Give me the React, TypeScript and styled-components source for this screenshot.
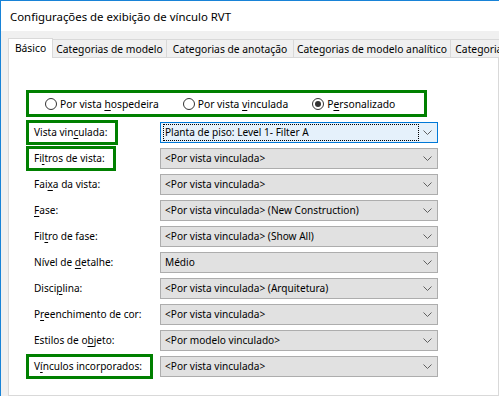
import React from 'react';
import styled, { createGlobalStyle } from 'styled-components';

const GREEN = '#008000';
const FONT = '"Segoe UI", "Noto Sans", sans-serif';

const GlobalStyle = createGlobalStyle`
  html, body { margin: 0; padding: 0; background: #fff; }
  body { font-family: ${FONT}; font-size: 10.1px; color: #000; }
  u { text-underline-offset: 2px; }
`;

const TABS: { title: string; width: number }[] = [
  { title: 'Básico', width: 45 },
  { title: 'Categorias de modelo', width: 114 },
  { title: 'Categorias de anotação', width: 127 },
  { title: 'Categorias de modelo analítico', width: 157 },
  { title: 'Categorias importadas', width: 120 },
];

type Field = { label: React.ReactNode; value: string; marked?: boolean; focused?: boolean };

const FIELDS: Field[] = [
  { label: <>Vista vin<u>c</u>ulada:</>, value: 'Planta de piso: Level 1- Filter A', marked: true, focused: true },
  { label: <>Fi<u>l</u>tros de vista:</>, value: '<Por vista vinculada>', marked: true },
  { label: <>Fai<u>x</u>a da vista:</>, value: '<Por vista vinculada>' },
  { label: <><u>F</u>ase:</>, value: '<Por vista vinculada> (New Construction)' },
  { label: <>Fil<u>t</u>ro de fase:</>, value: '<Por vista vinculada> (Show All)' },
  { label: <>Nível de <u>d</u>etalhe:</>, value: 'Médio' },
  { label: <>Disci<u>p</u>lina:</>, value: '<Por vista vinculada> (Arquitetura)' },
  { label: <>P<u>r</u>eenchimento de cor:</>, value: '<Por vista vinculada>' },
  { label: <>Estilos de o<u>b</u>jeto:</>, value: '<Por modelo vinculado>' },
  { label: <>V<u>í</u>nculos incorporados:</>, value: '<Por vista vinculada>', marked: true },
];

const Chevron = () => (
  <svg width="9" height="5" viewBox="0 0 9 5">
    <path d="M0.5 0.5 L4.5 4.5 L8.5 0.5" fill="none" stroke="#606060" strokeWidth="1" />
  </svg>
);

const App: React.FC = () => (
  <Window>
    <GlobalStyle />
    <TitleBar>Configurações de exibição de vínculo RVT</TitleBar>
    <Body>
      <TabStrip>
        {TABS.map((t, i) => (
          <Tab key={t.title} $active={i === 0} $width={t.width}>{t.title}</Tab>
        ))}
      </TabStrip>
      <Panel>
        <RadioBox>
          <RadioOption>
            <Radio />
            <span>Por vista <u>h</u>ospedeira</span>
          </RadioOption>
          <RadioOption>
            <Radio />
            <span>Por vista <u>v</u>inculada</span>
          </RadioOption>
          <RadioOption>
            <Radio $checked />
            <span>P<u>e</u>rsonalizado</span>
          </RadioOption>
        </RadioBox>
        <Fields>
          {FIELDS.map((f, i) => (
            <Row key={i}>
              <LabelCell>
                <Label $marked={!!f.marked}>{f.label}</Label>
              </LabelCell>
              <Combo $focused={!!f.focused}>
                <ComboText $focused={!!f.focused}>{f.value}</ComboText>
                <Chevron />
              </Combo>
            </Row>
          ))}
        </Fields>
      </Panel>
    </Body>
  </Window>
);

const Window = styled.div`
  width: 499px;
  height: 396px;
  box-sizing: border-box;
  border-top: 1px solid #1883d7;
  border-left: 1px solid #1883d7;
  display: flex;
  flex-direction: column;
  overflow: hidden;
`;
const TitleBar = styled.div`
  height: 30px;
  flex: none;
  display: flex;
  align-items: center;
  padding-left: 9px;
  background: #fff;
  font-size: 11.4px;
`;
const Body = styled.div`
  flex: 1;
  background: #f0f0f0;
  padding: 7px 0 0 7px;
  display: flex;
  flex-direction: column;
  min-height: 0;
`;
const TabStrip = styled.div`
  display: flex;
  align-items: flex-end;
  height: 19px;
  flex: none;
  white-space: nowrap;
  position: relative;
  z-index: 1;
  font-size: 10.3px;
`;
const Tab = styled.div<{ $active: boolean; $width: number }>`
  flex: none;
  box-sizing: border-box;
  width: ${({ $width }) => $width}px;
  height: ${({ $active }) => ($active ? 20 : 18)}px;
  margin-bottom: ${({ $active }) => ($active ? -1 : 0)}px;
  padding-bottom: ${({ $active }) => ($active ? 2 : 0)}px;
  display: flex;
  align-items: center;
  justify-content: center;
  background: ${({ $active }) => ($active ? '#fff' : '#f0f0f0')};
  border: 1px solid #d9d9d9;
  border-bottom: none;
  & + & { border-left: ${({ $active }) => ($active ? '1px solid #d9d9d9' : 'none')}; }
`;
const Panel = styled.div`
  flex: 1;
  background: #fff;
  border: 1px solid #d9d9d9;
  padding: 32px 0 0 17px;
`;
const RadioBox = styled.div`
  box-sizing: border-box;
  width: 401px;
  height: 27px;
  border: 3px solid ${GREEN};
  display: flex;
  align-items: center;
  padding-left: 16px;
  font-size: 10.3px;
`;
const RadioOption = styled.label`
  flex: none;
  display: flex;
  align-items: center;
  gap: 3px;
  margin-right: 24px;
  white-space: nowrap;
`;
const Radio = styled.span<{ $checked?: boolean }>`
  box-sizing: border-box;
  width: 12px;
  height: 12px;
  border-radius: 50%;
  border: 1px solid #333;
  background: #fff;
  display: inline-flex;
  align-items: center;
  justify-content: center;
  &::after {
    content: '';
    width: 6px;
    height: 6px;
    border-radius: 50%;
    background: ${({ $checked }) => ($checked ? '#333' : 'transparent')};
  }
`;
const Fields = styled.div`
  display: flex;
  flex-direction: column;
  margin-top: 2px;
`;
const Row = styled.div`
  display: flex;
  align-items: center;
  height: 26px;
`;
const LabelCell = styled.div`
  width: 134px;
  flex: none;
  display: flex;
  align-items: center;
`;
const Label = styled.span<{ $marked: boolean }>`
  display: inline-block;
  box-sizing: border-box;
  height: 25px;
  line-height: 19px;
  padding: 0 8px 0 5px;
  white-space: nowrap;
  border: 3px solid ${({ $marked }) => ($marked ? GREEN : 'transparent')};
`;
const Combo = styled.div<{ $focused: boolean }>`
  box-sizing: border-box;
  width: 278px;
  height: 21px;
  display: flex;
  align-items: center;
  justify-content: space-between;
  padding: 0 5px 0 3px;
  background: ${({ $focused }) => ($focused ? '#e5f1fb' : '#e1e1e1')};
  border: 1px solid ${({ $focused }) => ($focused ? '#0078d7' : '#adadad')};
`;
const ComboText = styled.span<{ $focused: boolean }>`
  box-sizing: border-box;
  width: ${({ $focused }) => ($focused ? '254px' : 'auto')};
  height: 15px;
  line-height: 14px;
  padding-left: 1px;
  outline: ${({ $focused }) => ($focused ? '1px dotted #000' : 'none')};
  white-space: nowrap;
`;

export default App;
